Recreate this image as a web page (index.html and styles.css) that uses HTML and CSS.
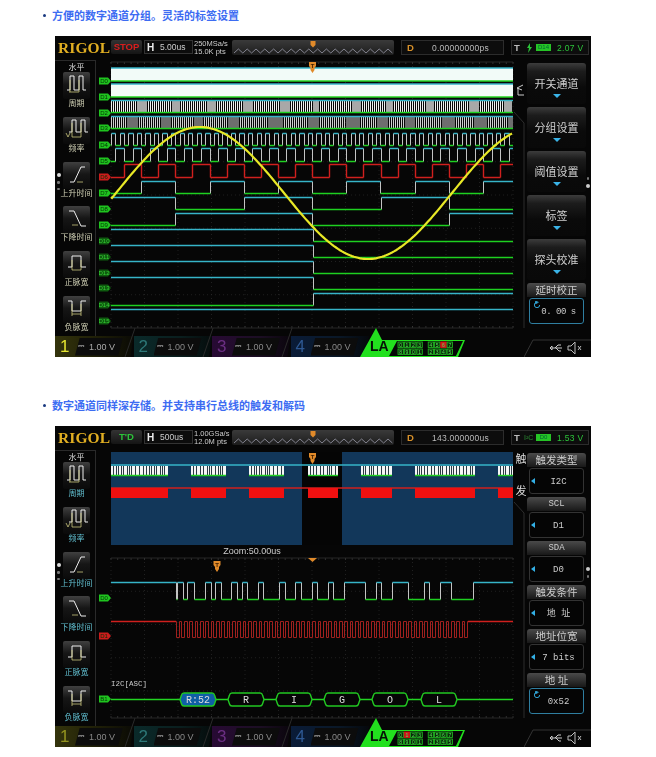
FILE: index.html
```html
<!DOCTYPE html>
<html lang="zh">
<head>
<meta charset="utf-8">
<title>RIGOL</title>
<link rel="stylesheet" href="styles.css">
</head>
<body>

<section class="sec">
  <h2 class="note">方便的数字通道分组。灵活的标签设置</h2>
  <div class="scope">
    <div class="top">
      <div class="logo">RIGOL</div>
      <div class="run stop">STOP</div>
      <div class="hbox"><b>H</b><span>5.00us</span></div>
      <div class="info">250MSa/s<br>15.0K pts</div>
      <div class="tl"><svg class="tlsvg" viewBox="0 0 162 15" data-tl="81"></svg></div>
      <div class="dbox"><b>D</b><span>0.00000000ps</span></div>
      <div class="tbox"><b>T</b><svg class="bolt" viewBox="0 0 8 10"><path d="M5 0 2 5h2L3 10l4-6H5z"/></svg><i>D14</i><em>2.07 V</em></div>
    </div>
    <div class="mid">
      <div class="left">
        <div class="ltitle">水平</div>
        <div class="item"><svg class="ico" viewBox="0 0 27 27"><path d="M4 18H7V4H11V18H16V4H20V18H23"/><path class="am" d="M6 20H16M7 8V20M16 8V20"/></svg><span>周期</span></div>
        <div class="item"><svg class="ico" viewBox="0 0 27 27"><path d="M6 15H9V3H13V15H18V3H22V15H25"/><path class="am" d="M9 20H18M9 6V20M18 6V20M3 16l2 4 2-4"/></svg><span>频率</span></div>
        <div class="item"><svg class="ico" viewBox="0 0 27 27"><path d="M7 20H11L18 5H22"/><path class="am" d="M14 20H20"/></svg><span>上升时间</span></div>
        <div class="item"><svg class="ico" viewBox="0 0 27 27"><path d="M6 5H11L18 20H23"/><path class="am" d="M9 19H15"/></svg><span>下降时间</span></div>
        <div class="item"><svg class="ico" viewBox="0 0 27 27"><path d="M5 16H9V5H18V16H23"/><path class="am" d="M9 19H18M9 9V19M18 9V19"/></svg><span>正脉宽</span></div>
        <div class="item"><svg class="ico" viewBox="0 0 27 27"><path d="M5 5H9V15H18V5H23"/><path class="am" d="M9 18H18M9 8V20M18 8V20"/></svg><span>负脉宽</span></div>
        <div class="dots"><i></i><i></i><i></i></div>
      </div>
      <svg class="plot" id="plotA" viewBox="96 60 418 276"></svg>
      <svg class="gutter" viewBox="514 60 13 276"><path class="gl" d="M514 112 524 123V328"/><path class="gi" d="M523 85 517 88 522 90M518 88V95H524"/></svg>
      <div class="right">
        <div class="key"><span>开关通道</span><u></u></div>
        <div class="key"><span>分组设置</span><u></u></div>
        <div class="key"><span>阈值设置</span><u></u></div>
        <div class="key"><span>标签</span><u></u></div>
        <div class="key"><span>探头校准</span><u></u></div>
        <div class="key2"><div class="khead">延时校正</div><div class="kbox sel"><svg class="spin" viewBox="0 0 9 9"><path d="M7.5 4.5A3 3 0 1 1 4.500 1.500M3 0v3l3-1.500z"/></svg><span class="tight">0. 00 s</span></div></div>
      </div>
      <div class="rdots"><i></i><i></i></div>
    </div>
    <div class="bot">
      <div class="chip c1 on"><b>1</b><span><s>⎓</s>1.00 V</span></div>
      <div class="chip c2"><b>2</b><span><s>⎓</s>1.00 V</span></div>
      <div class="chip c3"><b>3</b><span><s>⎓</s>1.00 V</span></div>
      <div class="chip c4"><b>4</b><span><s>⎓</s>1.00 V</span></div>
      <svg class="slants" viewBox="55 328 320 29"><path d="M135 328 125 357M213 328 203 357M292 328 282 357"/></svg>
      <svg class="la" viewBox="360 328 108 29" data-red="6"></svg>
      <svg class="sys" viewBox="0 0 67 21"><path class="sysl" d="M0 21 9 4H67"/><path class="usb" d="M28 12h10M31 12l3-3h3M32 12l3 3h2M28 10v4l-2-2z"/><path class="spk" d="M44 10h3l4-4v12l-4-4h-3zM54 10l3 4M57 10l-3 4"/></svg>
    </div>
  </div>
</section>

<section class="sec">
  <h2 class="note">数字通道同样深存储。并支持串行总线的触发和解码</h2>
  <div class="scope alt">
    <div class="top">
      <div class="logo">RIGOL</div>
      <div class="run td">T'D</div>
      <div class="hbox"><b>H</b><span>500us</span></div>
      <div class="info">1.00GSa/s<br>12.0M pts</div>
      <div class="tl"><svg class="tlsvg" viewBox="0 0 162 15" data-tl="81"></svg></div>
      <div class="dbox"><b>D</b><span>143.000000us</span></div>
      <div class="tbox"><b>T</b><small>I²C</small><i>D0</i><em>1.53 V</em></div>
    </div>
    <div class="mid">
      <div class="left">
        <div class="ltitle">水平</div>
        <div class="item"><svg class="ico" viewBox="0 0 27 27"><path d="M4 18H7V4H11V18H16V4H20V18H23"/><path class="am" d="M6 20H16M7 8V20M16 8V20"/></svg><span>周期</span></div>
        <div class="item"><svg class="ico" viewBox="0 0 27 27"><path d="M6 15H9V3H13V15H18V3H22V15H25"/><path class="am" d="M9 20H18M9 6V20M18 6V20M3 16l2 4 2-4"/></svg><span>频率</span></div>
        <div class="item"><svg class="ico" viewBox="0 0 27 27"><path d="M7 20H11L18 5H22"/><path class="am" d="M14 20H20"/></svg><span>上升时间</span></div>
        <div class="item"><svg class="ico" viewBox="0 0 27 27"><path d="M6 5H11L18 20H23"/><path class="am" d="M9 19H15"/></svg><span>下降时间</span></div>
        <div class="item"><svg class="ico" viewBox="0 0 27 27"><path d="M5 16H9V5H18V16H23"/><path class="am" d="M9 19H18M9 9V19M18 9V19"/></svg><span>正脉宽</span></div>
        <div class="item"><svg class="ico" viewBox="0 0 27 27"><path d="M5 5H9V15H18V5H23"/><path class="am" d="M9 18H18M9 8V20M18 8V20"/></svg><span>负脉宽</span></div>
        <div class="dots"><i></i><i></i><i></i></div>
      </div>
      <svg class="plot" id="plotB" viewBox="96 450 418 276"></svg>
      <svg class="gutter" viewBox="514 450 13 276"><path class="gl" d="M514 502 524 513V718"/><text class="gt" x="521" y="463">触</text><text class="gt" x="521" y="495">发</text></svg>
      <div class="right">
        <div class="key2"><div class="khead">触发类型</div><div class="kbox"><u></u><span>I2C</span></div></div>
        <div class="key2"><div class="khead mono">SCL</div><div class="kbox"><u></u><span>D1</span></div></div>
        <div class="key2"><div class="khead mono">SDA</div><div class="kbox"><u></u><span>D0</span></div></div>
        <div class="key2"><div class="khead">触发条件</div><div class="kbox"><u></u><span>地 址</span></div></div>
        <div class="key2"><div class="khead">地址位宽</div><div class="kbox"><u></u><span>7 bits</span></div></div>
        <div class="key2"><div class="khead">地 址</div><div class="kbox sel"><svg class="spin" viewBox="0 0 9 9"><path d="M7.5 4.5A3 3 0 1 1 4.500 1.500M3 0v3l3-1.500z"/></svg><span>0x52</span></div></div>
      </div>
      <div class="rdots low"><i></i><i></i></div>
    </div>
    <div class="bot">
      <div class="chip c1"><b>1</b><span><s>⎓</s>1.00 V</span></div>
      <div class="chip c2"><b>2</b><span><s>⎓</s>1.00 V</span></div>
      <div class="chip c3"><b>3</b><span><s>⎓</s>1.00 V</span></div>
      <div class="chip c4"><b>4</b><span><s>⎓</s>1.00 V</span></div>
      <svg class="slants" viewBox="55 328 320 29"><path d="M135 328 125 357M213 328 203 357M292 328 282 357"/></svg>
      <svg class="la" viewBox="360 328 108 29" data-red="1"></svg>
      <svg class="sys" viewBox="0 0 67 21"><path class="sysl" d="M0 21 9 4H67"/><path class="usb" d="M28 12h10M31 12l3-3h3M32 12l3 3h2M28 10v4l-2-2z"/><path class="spk" d="M44 10h3l4-4v12l-4-4h-3zM54 10l3 4M57 10l-3 4"/></svg>
    </div>
  </div>
</section>

<script src="app.js"></script>
</body>
</html>
```

FILE: styles.css
```css
* { box-sizing: border-box; }
html, body { margin: 0; padding: 0; background: #fff; }
body { font-family: "Liberation Sans", "Noto Sans CJK SC", sans-serif; }

.sec { padding: 9px 0 33px 55px; }
.note {
  position: relative;
  margin: 0 0 15px -3px;
  height: 12px;
  font: bold 11px/12px "Noto Sans CJK SC", sans-serif;
  color: #3d6cf2;
  white-space: nowrap;
}
.note::before {
  content: "";
  position: absolute;
  left: -9px;
  top: 5px;
  width: 3px;
  height: 3px;
  border-radius: 50%;
  background: #1a3a80;
}

.scope {
  width: 536px;
  height: 321px;
  background: #060606;
  display: flex;
  flex-direction: column;
  color: #ddd;
  filter: blur(.3px);
}

/* top bar */
.top { height: 24px; flex: none; display: flex; align-items: flex-start; padding: 4px 0 0 3px; }
.logo {
  width: 50px;
  margin-top: -1px;
  font: bold 15.5px/17px "Liberation Serif", serif;
  color: #e0ae22;
  letter-spacing: .1px;
}
.run {
  width: 31px;
  height: 14px;
  margin-left: 3px;
  background: linear-gradient(#333, #151515);
  border-radius: 2px;
  font: bold 9.5px/14px "Liberation Sans", sans-serif;
  text-align: center;
}
.stop { color: #d81e1e; }
.td { color: #2cc43a; }
.hbox {
  width: 49px;
  height: 14px;
  margin-left: 2px;
  border: 1px solid #333;
  background: #0c0c0c;
  display: flex;
  align-items: center;
  padding-left: 2px;
  font-size: 8.5px;
}
.hbox b { font-size: 10px; color: #eee; width: 10px; }
.hbox span { margin-left: 3px; color: #ccc; }
.info { width: 36px; margin-left: 1px; font-size: 7.5px; line-height: 8px; color: #ccc; white-space: nowrap; }
.tl { width: 162px; height: 15px; margin-left: 2px; background: linear-gradient(#3a3a3a, #1c1c1c); border-radius: 2px; }
.tlsvg { display: block; width: 162px; height: 15px; }
.tlw { fill: none; stroke: #aab; stroke-width: .7; }
.tlm { fill: #e08a2a; }
.dbox {
  width: 103px;
  height: 15px;
  margin-left: 7px;
  border: 1px solid #2c2c2c;
  background: #0d0d0d;
  display: flex;
  align-items: center;
  padding-left: 5px;
  font-size: 8.5px;
  color: #bbb;
}
.dbox b { color: #d8912a; font-size: 9.5px; width: 25px; }
.dbox span { letter-spacing: .25px; }
.tbox {
  width: 78px;
  height: 15px;
  margin-left: 7px;
  border: 1px solid #2c2c2c;
  background: #0d0d0d;
  display: flex;
  align-items: center;
  padding-left: 2px;
  font-size: 8.5px;
}
.tbox b { color: #bbb; font-size: 9.5px; width: 10px; }
.bolt { width: 8px; height: 10px; margin: 0 3px 0 1px; fill: #2cc43a; }
.tbox small { width: 12px; font-size: 7px; color: #2b8a33; }
.tbox i { width: 15px; height: 7px; background: #26c426; color: #063; font: normal 6px/7px "Liberation Sans", sans-serif; text-align: center; }
.tbox em { margin-left: 6px; color: #2cc43a; font-style: normal; letter-spacing: .3px; white-space: nowrap; }

/* middle */
.mid { position: relative; height: 276px; flex: none; display: flex; }
.left {
  width: 41px;
  flex: none;
  border-right: 1px solid #2a2a2a;
  border-top: 1px solid #2a2a2a;
  display: flex;
  flex-direction: column;
  align-items: center;
  padding-left: 3px;
}
.ltitle { height: 14px; font: 8px/11px "Noto Sans CJK SC", sans-serif; color: #ddd; }
.item { height: 44.8px; display: flex; flex-direction: column; align-items: center; flex: none; }
.ico {
  width: 27px;
  height: 27px;
  flex: none;
  border-radius: 2px;
  background: linear-gradient(#404040, #161616 45%, #0a0a0a);
  fill: none;
  stroke: #eee;
  stroke-width: 1;
}
.ico .am { stroke: #c8c47c; stroke-width: .8; }
.item span { font: 8px/10px "Noto Sans CJK SC", sans-serif; color: #cfcfb4; white-space: nowrap; margin-top: -1px; }
.alt .item span { color: #62bfd0; }
.dots { position: absolute; left: 1px; top: 113px; display: flex; flex-direction: column; gap: 4px; align-items: center; width: 5px; }
.dots i { width: 2.500px; height: 2.500px; background: #777; border-radius: 50%; }
.dots i:first-child { width: 4px; height: 4px; background: #ddd; }
.rdots { position: absolute; left: 531px; top: 117px; display: flex; flex-direction: column; gap: 4px; width: 4px; align-items: center; }
.rdots i { width: 2.500px; height: 2.500px; background: #777; border-radius: 50%; }
.rdots i:last-child { width: 4px; height: 4px; background: #ccc; }
.rdots.low i:first-child { width: 4px; height: 4px; background: #ccc; }
.rdots.low i:last-child { width: 2.500px; height: 2.500px; background: #777; }

.plot { width: 418px; height: 276px; flex: none; display: block; }
.gutter { width: 13px; height: 276px; flex: none; display: block; }
.gl { fill: none; stroke: #2d2d2d; }
.gi { fill: none; stroke: #ccc; }
.gt { font: 11px "Noto Sans CJK SC", sans-serif; fill: #ddd; text-anchor: middle; }

.right { width: 59px; flex: none; display: flex; flex-direction: column; gap: 3px; padding-top: 3px; }
.key {
  height: 41px;
  flex: none;
  border-radius: 3px;
  background: linear-gradient(#3c3c3c 0, #1c1c1c 20%, #0a0a0a 60%, #090909 100%);
  display: flex;
  flex-direction: column;
  align-items: center;
  padding-top: 13px;
}
.key span { font: 11px/14px "Noto Sans CJK SC", sans-serif; color: #cfcfcf; white-space: nowrap; }
.key u { width: 0; height: 0; margin-top: 4px; border: solid transparent; border-width: 4px 4px 0; border-top-color: #3ab4e8; }
.key2 { height: 41px; flex: none; }
.khead {
  height: 14px;
  border-radius: 3px 3px 0 0;
  background: linear-gradient(#4a4a4a, #181818);
  font: 10.500px/14px "Noto Sans CJK SC", sans-serif;
  color: #ccc;
  text-align: center;
  white-space: nowrap;
}
.khead.mono { font: 9px/14px "Liberation Mono", monospace; }
.kbox {
  position: relative;
  height: 26px;
  margin: 1px 2px 0;
  border: 1px solid #333;
  border-radius: 3px;
  background: #050505;
  display: flex;
  align-items: center;
  justify-content: center;
  font: 9px/24px "Liberation Mono", "Noto Sans CJK SC", monospace;
  color: #ccc;
  white-space: nowrap;
}
.kbox.sel { border-color: #2f7ea0; }
.kbox span { padding: 2px 0 0 4px; }
.kbox .tight { letter-spacing: -.5px; }
.kbox u { position: absolute; left: 1px; top: 9px; width: 0; height: 0; border: solid transparent; border-width: 3.500px 4px 3.500px 0; border-right-color: #33b0e6; }
.spin { position: absolute; left: 3px; top: 2px; width: 8px; height: 8px; fill: #33b0e6; stroke: #33b0e6; stroke-width: 1; }
.spin path { fill: none; }

/* bottom */
.bot { height: 21px; flex: none; display: flex; position: relative; }
.chip {
  position: relative;
  width: 78.500px;
  flex: none;
  display: flex;
  align-items: center;
  clip-path: polygon(0 0, 100% 0, 96% 100%, 0 100%);
}
.chip b { width: 20px; padding-left: 5px; font: normal 17px/21px "Liberation Sans", sans-serif; opacity: .55; }
.chip.on b { opacity: 1; }
.chip span {
  height: 18px;
  width: 48px;
  display: flex;
  align-items: center;
  font-size: 9px;
  color: #888;
  white-space: nowrap;
  background: #0c0c0c;
  padding-left: 3px;
  clip-path: polygon(10% 0, 100% 0, 90% 100%, 0 100%);
}
.chip.on span { color: #aaa; }
.chip s { text-decoration: none; font-size: 8px; width: 11px; color: #777; }
.c1 { background: linear-gradient(90deg, #34340c, #1c1c06 60%, #0a0a05); }
.c1 b { color: #e5e530; }
.c2 { background: linear-gradient(90deg, #0a2a2a, #0a1e1e 60%, #050c0c); }
.c2 b { color: #49b8b8; }
.c3 { background: linear-gradient(90deg, #280a34, #1c0e24 60%, #0a050c); }
.c3 b { color: #a54cc8; }
.c4 { background: linear-gradient(90deg, #0a1c38, #0a1828 60%, #05080c); }
.c4 b { color: #4b8be0; }
.slants { position: absolute; left: 0; top: -8px; width: 320px; height: 29px; overflow: visible; fill: none; stroke: #2a2a2a; }
.la { position: absolute; left: 305px; top: -8px; width: 108px; height: 29px; overflow: visible; }
.lag { fill: #22e01e; }
.lab { fill: #060606; }
.lat { font: bold 14px "Liberation Sans", sans-serif; fill: #061006; }
.lac { fill: #0a2a0a; stroke: #22c022; stroke-width: .8; }
.lacr { fill: #d01818; stroke: #d01818; }
.lad { font: 5px "Liberation Sans", sans-serif; fill: #55e055; text-anchor: middle; }
.sys { position: absolute; right: 0; top: 0; width: 67px; height: 21px; fill: none; }
.sysl { stroke: #333; }
.usb { stroke: #ccc; }
.spk { stroke: #bbb; }

/* plot layers */
.grid { stroke: #2c2c2c; stroke-width: .7; stroke-dasharray: 1 3; fill: none; }
.frame { stroke: #262626; fill: none; }
.tick { stroke: #444; stroke-width: .7; fill: none; }
.teal { stroke: #36b4c8; stroke-width: 1.400; fill: none; }
.green { stroke: #1ed020; stroke-width: 1.400; fill: none; }
.greenb { stroke: #22d422; stroke-width: 1.600; fill: none; }
.edge { stroke: #c4c4c4; stroke-width: 1; fill: none; }
.stripe { stroke: #f0f0f0; stroke-width: 1; fill: none; shape-rendering: crispEdges; }
.stripe2 { stroke: #d0d0d0; stroke-width: 1; fill: none; shape-rendering: crispEdges; }
.grayb { fill: #a8a8a8; }
.grayd { fill: #6e6e6e; }
.gap { stroke: #2a3a44; stroke-width: 1; fill: none; shape-rendering: crispEdges; }
.red { stroke: #d0201e; stroke-width: 1.400; fill: none; }
.redd { stroke: #a0201e; stroke-width: 1; fill: none; }
.yel { stroke: #e8e826; stroke-width: 2.200; fill: none; }
.band { fill: #f2fbf8; }
.zoomb { fill: #12375a; }
.zoomw { fill: #050505; }
.blk { fill: #f01010; }
.wb { fill: #f6f6f6; }
.tag { fill: #1fc41f; }
.tagd { fill: #0f5a0f; }
.tagr { fill: #cc1c1c; }
.tagt { font: 6px "Liberation Sans", sans-serif; fill: #053005; text-anchor: middle; }
.tagtd { font: 6px "Liberation Sans", sans-serif; fill: #35d035; text-anchor: middle; }
.pin { fill: #e08a2a; }
.pint { font: bold 6px "Liberation Sans", sans-serif; fill: #402000; text-anchor: middle; }
.zl { font: 9px "Liberation Sans", sans-serif; fill: #ccc; text-anchor: middle; }
.i2c { font: 7.500px "Liberation Mono", monospace; fill: #ccc; }
.pk { fill: #060606; stroke: #22c822; stroke-width: 1.400; }
.pkb { fill: #0f5fa5; stroke: #22c822; stroke-width: 1.400; }
.pkt { font: 10px "Liberation Mono", monospace; fill: #ddd; text-anchor: middle; }
```

FILE: app.js
```js
var NS = "http://www.w3.org/2000/svg";
function el(svg, tag, attrs, text) {
  var n = document.createElementNS(NS, tag);
  for (var k in attrs) n.setAttribute(k, attrs[k]);
  if (text) n.textContent = text;
  svg.appendChild(n);
  return n;
}
function p(svg, d, cls) { el(svg, "path", { d: d, "class": cls }); }
function snap(x) { return Math.round(x) + 0.5; }

function gridLines(svg, y0, y1) {
  var d = "", t = "", i, x, y;
  for (i = 0; i <= 12; i++) { x = 111 + 33.5 * i; d += "M" + x + " " + y0 + "V" + y1; }
  for (y = y0 + 33.25; y < y1; y += 33.25) { d += "M111 " + y + "H513"; }
  for (x = 111; x <= 513; x += 6.7) {
    t += "M" + x + " " + y0 + "v2M" + x + " " + y1 + "v-2";
  }
  p(svg, d, "grid");
  p(svg, t, "tick");
  p(svg, "M111 " + y0 + "H513M111 " + y1 + "H513", "frame");
}

/* trace from a start state and a list of transition x's */
function trace(svg, xs, hi, lo, start, x0, x1, clsHi, clsLo, clsEdge) {
  var dh = "", dl = "", de = "", s = start, last = x0, i, x;
  var list = xs.map(snap).concat([x1]);
  hi += 0.5; lo += 0.5;
  for (i = 0; i < list.length; i++) {
    x = list[i];
    if (s) dh += "M" + last + " " + hi + "H" + x;
    else dl += "M" + last + " " + lo + "H" + x;
    if (i < list.length - 1) { de += "M" + x + " " + hi + "V" + lo; s = !s; last = x; }
  }
  p(svg, de, clsEdge);
  p(svg, dh, clsHi);
  p(svg, dl, clsLo);
}
/* binary counter bit: goes low at x=175.3 */
function counter(half) {
  var xs = [], x = 175.3;
  while (x - half > 111) x -= half;
  for (; x < 513; x += half) xs.push(x);
  var k = Math.round((xs[0] - 175.3) / half);
  return { xs: xs, start: Math.abs(k) % 2 === 0 };
}
function tag(svg, y, label, kind) {
  var box = kind === "red" ? "tagr" : kind === "dim" ? "tagd" : "tag";
  p(svg, "M99 " + (y - 3.5) + "H108L111 " + y + "L108 " + (y + 3.5) + "H99Z", box);
  el(svg, "text", { x: 104, y: y + 2, "class": kind === "dim" ? "tagtd" : "tagt" }, label);
}
function pin(svg, x, y) {
  p(svg, "M" + (x - 3.5) + " " + y + "H" + (x + 3.5) + "V" + (y + 4) + "L" + (x + 2) + " " + (y + 6) + "V" + (y + 8) + "L" + x + " " + (y + 11) + "L" + (x - 2) + " " + (y + 8) + "V" + (y + 6) + "L" + (x - 3.5) + " " + (y + 4) + "Z", "pin");
  el(svg, "text", { x: x, y: y + 6, "class": "pint" }, "T");
}
/* dense digital activity: 1px stripes with grey aliased runs */
function dense(svg, y0, y1, seed, grayEvery, grayLen, grayCls, stripeCls) {
  var d = "", x = 111, r = seed;
  while (x < 513) {
    r = (r * 31 + 17) % 101;
    var run = grayEvery + (r % 14);
    for (var i = 0; i < run && x < 513; i += 2, x += 2) d += "M" + (x + 0.5) + " " + y0 + "V" + y1;
    var g = grayLen + (r % 7);
    if (x + g > 513) g = 513 - x;
    if (g > 0) el(svg, "rect", { x: x, y: y0, width: g, height: y1 - y0, "class": grayCls });
    x += g + 1;
  }
  p(svg, d, stripeCls);
}

/* --- first screen --- */
(function () {
  var s = document.getElementById("plotA");
  gridLines(s, 62, 328);
  var names = [81, 97, 113, 128, 145, 161, 177, 193, 209, 225, 241, 257, 273, 288, 305, 321];
  names.forEach(function (y, n) { tag(s, y, "D" + n, n === 6 ? "red" : n >= 10 ? "dim" : ""); });

  /* D0, D1: solid bands */
  [[68, 81], [84, 97]].forEach(function (b) {
    el(s, "rect", { x: 111, y: b[0], width: 402, height: b[1] - b[0], "class": "band" });
    p(s, "M111 " + b[0] + "H513", "teal");
    p(s, "M111 " + b[1] + "H513", "greenb");
  });
  /* D2, D3: dense */
  dense(s, 101, 112, 7, 22, 6, "grayb", "stripe");
  p(s, "M111 100.500H513", "teal");
  p(s, "M111 112.500H513", "green");
  dense(s, 117, 128, 13, 14, 9, "grayd", "stripe2");
  p(s, "M111 116.500H513", "teal");
  p(s, "M111 128.500H513", "green");
  /* D4..D8 counter bits */
  [[4.275, 133, 145], [8.55, 148, 161], [34.2, 181, 193], [68.4, 197, 209]].forEach(function (b) {
    var c = counter(b[0]);
    trace(s, c.xs, b[1], b[2], c.start, 111, 513, "teal", "green", "edge");
  });
  var c6 = counter(17.1);
  trace(s, c6.xs, 164, 177, c6.start, 111, 513, "red", "red", "red");
  trace(s, [175.3, 312.3, 449.2], 213, 225, false, 111, 513, "teal", "green", "edge");
  [[229, 241], [245, 257], [261, 273], [277, 289]].forEach(function (b) {
    trace(s, [312.6], b[0], b[1], true, 111, 513, "teal", "green", "edge");
  });
  trace(s, [312.6], 293, 305, false, 111, 513, "teal", "green", "edge");
  p(s, "M111 309.500H513", "teal");

  /* analog sine */
  var d = "M111 197", x;
  for (x = 112; x <= 513; x += 2) {
    d += "L" + x + " " + (193 - 66 * Math.sin(2 * Math.PI * (x - 116) / 336)).toFixed(1);
  }
  p(s, d, "yel");
  pin(s, 312.5, 62);
})();

/* --- second screen --- */
(function () {
  var s = document.getElementById("plotB");
  el(s, "rect", { x: 111, y: 452, width: 402, height: 93, "class": "zoomb" });
  el(s, "rect", { x: 302, y: 452, width: 40, height: 93, "class": "zoomw" });
  p(s, "M111 465H513", "teal");
  p(s, "M111 488H513", "red");
  [[111, 168], [191, 226], [249, 284], [308, 338], [361, 392], [415, 475], [498, 513]].forEach(function (b) {
    var d = "", x, r = b[0];
    el(s, "rect", { x: b[0], y: 488, width: b[1] - b[0], height: 10, "class": "blk" });
    el(s, "rect", { x: b[0], y: 466, width: b[1] - b[0], height: 9, "class": "wb" });
    for (x = b[0] + 2; x < b[1] - 1;) {
      d += "M" + (x + 0.5) + " 466V475";
      r = (r * 13 + 5) % 23;
      x += 2 + (r % 3);
    }
    p(s, d, "gap");
    p(s, "M" + b[0] + " 475.500H" + b[1], "green");
  });
  pin(s, 312.5, 453);

  el(s, "text", { x: 252, y: 554, "class": "zl" }, "Zoom:50.00us");

  gridLines(s, 558, 718);
  p(s, "M308 558h9l-4.500 4z", "pin");
  pin(s, 217, 561);

  /* D0: high, with a burst of pulses */
  var tops = [[177, 183], [187, 194], [205, 211], [215, 221], [231, 237], [242, 247], [258, 263], [279, 285], [295, 301], [312, 317], [328, 333], [344, 365], [376, 381], [392, 408], [424, 429], [440, 451], [473, 513]];
  var xs = [176];
  tops.forEach(function (t) { xs.push(t[0]); if (t[1] < 513) xs.push(t[1]); });
  trace(s, xs, 582, 599, true, 111, 513, "teal", "green", "edge");
  tag(s, 598, "D0", "");

  /* D1: clock */
  var ed = [], x;
  for (x = 176; x < 468; x += 2.67) ed.push(x);
  if (ed.length % 2 === 1) ed.push(468);
  trace(s, ed, 621, 637, true, 176, 468, "redd", "redd", "redd");
  p(s, "M111 621.500H176M468 621.500H513", "red");
  tag(s, 636, "D1", "red");

  /* bus */
  p(s, "M111 699.500H513", "greenb");
  tag(s, 699, "B1", "");
  el(s, "text", { x: 111, y: 686, "class": "i2c" }, "I2C[ASC]");
  [[180, 216, "R:52", true], [228, 264, "R"], [276, 312, "I"], [324, 360, "G"], [372, 408, "O"], [421, 457, "L"]].forEach(function (k) {
    var a = k[0], b = k[1];
    p(s, "M" + a + " 699.500L" + (a + 1.5) + " 695Q" + (a + 2) + " 693 " + (a + 4) + " 693H" + (b - 4) + "Q" + (b - 2) + " 693 " + (b - 1.5) + " 695L" + b + " 699.500L" + (b - 1.5) + " 704Q" + (b - 2) + " 706 " + (b - 4) + " 706H" + (a + 4) + "Q" + (a + 2) + " 706 " + (a + 1.5) + " 704Z", k[3] ? "pkb" : "pk");
    el(s, "text", { x: (a + b) / 2, y: 703, "class": "pkt" }, k[2]);
  });
})();

/* --- mini timeline --- */
Array.prototype.forEach.call(document.querySelectorAll(".tlsvg"), function (svg) {
  var mark = +svg.getAttribute("data-tl"), d = "M2 13", x, up = true;
  for (x = 2; x < 160; x += 4.4) { d += "L" + (x + 4.4).toFixed(1) + " " + (up ? 9 : 13); up = !up; }
  p(svg, d, "tlw");
  p(svg, "M" + (mark - 2.5) + " 1h5v4l-2.500 2.500l-2.500-2.500z", "tlm");
});

/* --- LA tab --- */
Array.prototype.forEach.call(document.querySelectorAll(".la"), function (svg) {
  var red = +svg.getAttribute("data-red");
  p(svg, "M376 328 360 357H458L465 340H382Z", "lag");
  p(svg, "M397 341H463L456 356H389Z", "lab");
  el(svg, "text", { x: 370, y: 351, "class": "lat" }, "LA");
  var labels = ["0", "1", "2", "3", "4", "5", "6", "7", "8", "9", "0", "1", "2", "3", "4", "5"];
  labels.forEach(function (t, n) {
    var col = n % 8, row = n < 8 ? 0 : 1;
    var x = 398 + col * 6.3 + (col > 3 ? 5 : 0), y = 342 + row * 7;
    el(svg, "rect", { x: x, y: y, width: 5.4, height: 5.4, "class": n === red ? "lacr" : "lac" });
    el(svg, "text", { x: x + 2.7, y: y + 4.500, "class": "lad" }, t);
  });
});
```
